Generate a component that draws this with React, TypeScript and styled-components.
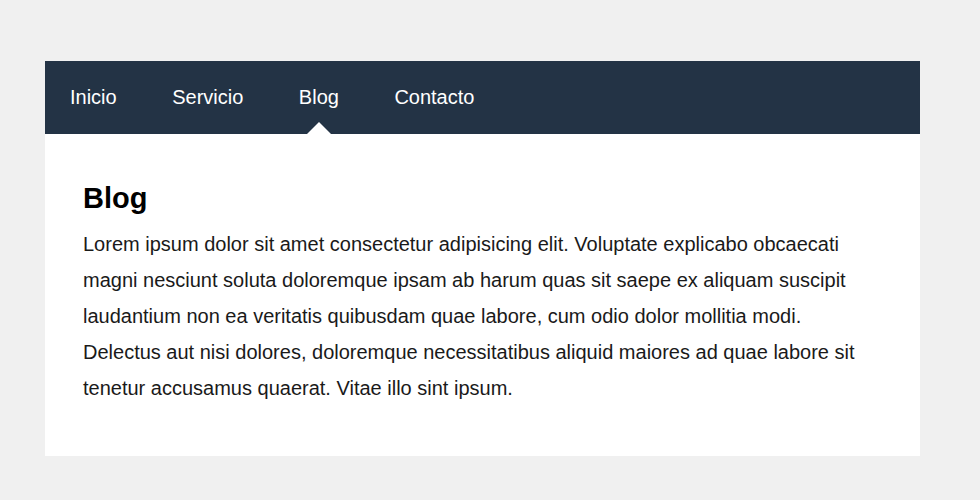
import React from "react";
import styled, { createGlobalStyle } from "styled-components";

const Global = createGlobalStyle`
  html, body { margin: 0; padding: 0; background: #f0f0f0; }
  body { font-family: "Liberation Sans", Arial, sans-serif; }
`;

const Page = styled.div`
  padding: 61px 60px 44px 45px;
`;

const Card = styled.div`
  width: 875px;
  background: #ffffff;
`;

const Nav = styled.nav`
  height: 73px;
  background: #233345;
  display: flex;
  align-items: stretch;
  padding-left: 25px;
  gap: 55.5px;
`;

const NavItem = styled.a<{ $active?: boolean }>`
  position: relative;
  display: flex;
  align-items: center;
  color: #ffffff;
  font-size: 20px;
  text-decoration: none;
  &::after {
    content: "";
    display: ${(p) => (p.$active ? "block" : "none")};
    position: absolute;
    left: 50%;
    bottom: 0;
    transform: translateX(-50%);
    width: 0;
    height: 0;
    border-left: 12px solid transparent;
    border-right: 12px solid transparent;
    border-bottom: 12px solid #ffffff;
  }
`;

const Content = styled.section`
  padding: 48px 38px 50px 38px;
`;

const Title = styled.h1`
  margin: 0 0 11px;
  font-size: 29px;
  font-weight: bold;
  color: #000;
`;

const Text = styled.p`
  margin: 0;
  font-size: 20px;
  line-height: 36px;
  color: #1a1a1a;
`;

const items = ["Inicio", "Servicio", "Blog", "Contacto"];

export default function App() {
  return (
    <>
      <Global />
      <Page>
        <Card>
          <Nav>
            {items.map((it) => (
              <NavItem key={it} href="#" $active={it === "Blog"}>
                {it}
              </NavItem>
            ))}
          </Nav>
          <Content>
            <Title>Blog</Title>
            <Text>
              Lorem ipsum dolor sit amet consectetur adipisicing elit. Voluptate explicabo obcaecati
              magni nesciunt soluta doloremque ipsam ab harum quas sit saepe ex aliquam suscipit
              laudantium non ea veritatis quibusdam quae labore, cum odio dolor mollitia modi.
              Delectus aut nisi dolores, doloremque necessitatibus aliquid maiores ad quae labore sit
              tenetur accusamus quaerat. Vitae illo sint ipsum.
            </Text>
          </Content>
        </Card>
      </Page>
    </>
  );
}
